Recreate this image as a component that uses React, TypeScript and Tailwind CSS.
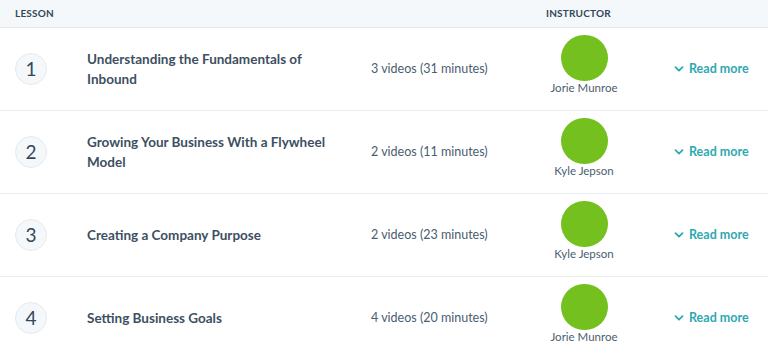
const LESSONS = [
  { n: 1, title: "Understanding the Fundamentals of Inbound", videos: "3 videos (31 minutes)", instructor: "Jorie Munroe" },
  { n: 2, title: "Growing Your Business With a Flywheel Model", videos: "2 videos (11 minutes)", instructor: "Kyle Jepson" },
  { n: 3, title: "Creating a Company Purpose", videos: "2 videos (23 minutes)", instructor: "Kyle Jepson" },
  { n: 4, title: "Setting Business Goals", videos: "4 videos (20 minutes)", instructor: "Jorie Munroe" },
];

function Chevron() {
  return (
    <svg width="10" height="10" viewBox="0 0 10 10" className="shrink-0">
      <path d="M1.5 3.2 L5 6.6 L8.5 3.2" fill="none" stroke="currentColor" strokeWidth="1.8" strokeLinecap="round" strokeLinejoin="round" />
    </svg>
  );
}

export default function App() {
  return (
    <div className="w-[768px] h-[357px] overflow-hidden bg-white text-[#33475b]" style={{ fontFamily: "Lato, 'Open Sans', sans-serif" }}>
      {/* Header */}
      <div className="flex items-center h-[28px] bg-[#f5f8fa] border-b border-[#e5e9ee] text-[10px] font-bold tracking-[0.2px]">
        <div className="pl-[15px] w-[546px]">LESSON</div>
        <div>INSTRUCTOR</div>
      </div>

      {LESSONS.map((l) => (
        <div key={l.n} className="flex items-center h-[83px] border-b border-[#e8ecf0]">
          <div className="pl-[15px] w-[87px] shrink-0">
            <div className="w-[32px] h-[32px] rounded-full bg-[#f5f8fa] border border-[#e6eaee] flex items-center justify-center text-[19px] text-[#33475b]">
              {l.n}
            </div>
          </div>
          <div className="w-[284px] shrink-0 pr-[40px] text-[13.5px] font-bold leading-[20px] text-[#3d4f62]">
            {l.title}
          </div>
          <div className="w-[164px] shrink-0 text-[12.5px] text-[#4a5d70]">{l.videos}</div>
          <div className="w-[98px] shrink-0 self-start pt-[7px] flex flex-col items-center">
            <div className="w-[47px] h-[46px] rounded-full bg-[#73c01f]" />
            <div className="text-[11.5px] leading-[14px] text-[#4a5d70]">{l.instructor}</div>
          </div>
          <div className="ml-[41px] flex items-center gap-[5px] text-[#2ea9b0] text-[12.5px] font-bold">
            <Chevron />
            <span>Read more</span>
          </div>
        </div>
      ))}
    </div>
  );
}
